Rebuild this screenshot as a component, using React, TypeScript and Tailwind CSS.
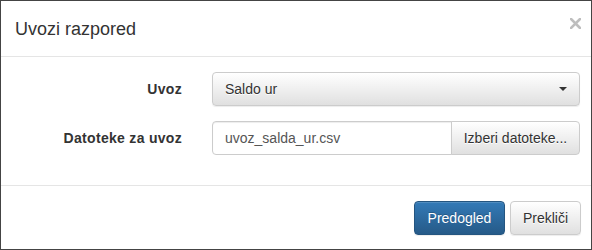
export default function App() {
    return (
        <div className="w-[592px] h-[250px] flex flex-col border border-[#444] bg-white font-['Liberation_Sans',Arial,sans-serif] text-[14px] text-[#333]">
            <div className="h-[56px] shrink-0 flex items-start justify-between border-b border-[#e5e5e5] pl-[14px] pr-[10px] pt-[16px]">
                <h4 className="text-[18px] leading-[1.42857]">Uvozi razpored</h4>
                <button className="mt-[1px] opacity-25" aria-label="Zapri">
                    <svg width="11" height="11" viewBox="0 0 11 11">
                        <path d="M1 1 L10 10 M10 1 L1 10" stroke="#000" strokeWidth="2.6" strokeLinecap="square" />
                    </svg>
                </button>
            </div>

            <div className="flex flex-col gap-[15px] pt-[15px] pb-[30px] shrink-0">
                <div className="flex items-center">
                    <label className="w-[181px] text-right font-bold tracking-[0.3px]">Uvoz</label>
                    <button className="ml-[30px] w-[368px] h-[34px] flex items-center justify-between px-[12px] border border-[#ccc] rounded-[4px] bg-gradient-to-b from-white to-[#e0e0e0] shadow-[0_1px_1px_rgba(0,0,0,0.075)] [text-shadow:0_1px_0_#fff]">
                        <span>Saldo ur</span>
                        <span className="w-0 h-0 border-t-[4px] border-t-[#333] border-x-[4px] border-x-transparent" />
                    </button>
                </div>
                <div className="flex items-center">
                    <label className="w-[181px] text-right font-bold tracking-[0.3px]">Datoteke za uvoz</label>
                    <div className="ml-[30px] w-[368px] h-[34px] flex">
                        <div className="w-[240px] h-full flex items-center px-[12px] border border-[#ccc] rounded-l-[4px] text-[#555] shadow-[inset_0_1px_1px_rgba(0,0,0,0.075)]">
                            uvoz_salda_ur.csv
                        </div>
                        <button className="-ml-px flex-1 h-full border border-[#ccc] rounded-r-[4px] bg-gradient-to-b from-white to-[#e0e0e0] [text-shadow:0_1px_0_#fff]">
                            Izberi datoteke...
                        </button>
                    </div>
                </div>
            </div>

            <div className="flex-1 flex justify-end items-start gap-[5px] border-t border-[#e5e5e5] pt-[15px] pr-[10px]">
                <button className="w-[91px] h-[34px] text-white border border-[#245580] rounded-[4px] bg-gradient-to-b from-[#337ab7] to-[#265a88] shadow-[inset_0_1px_0_rgba(255,255,255,0.15),0_1px_1px_rgba(0,0,0,0.075)] [text-shadow:0_-1px_0_rgba(0,0,0,0.2)]">
                    Predogled
                </button>
                <button className="w-[71px] h-[34px] border border-[#ccc] rounded-[4px] bg-gradient-to-b from-white to-[#e0e0e0] shadow-[inset_0_1px_0_rgba(255,255,255,0.15),0_1px_1px_rgba(0,0,0,0.075)] [text-shadow:0_1px_0_#fff]">
                    Prekliči
                </button>
            </div>
        </div>
    );
}
